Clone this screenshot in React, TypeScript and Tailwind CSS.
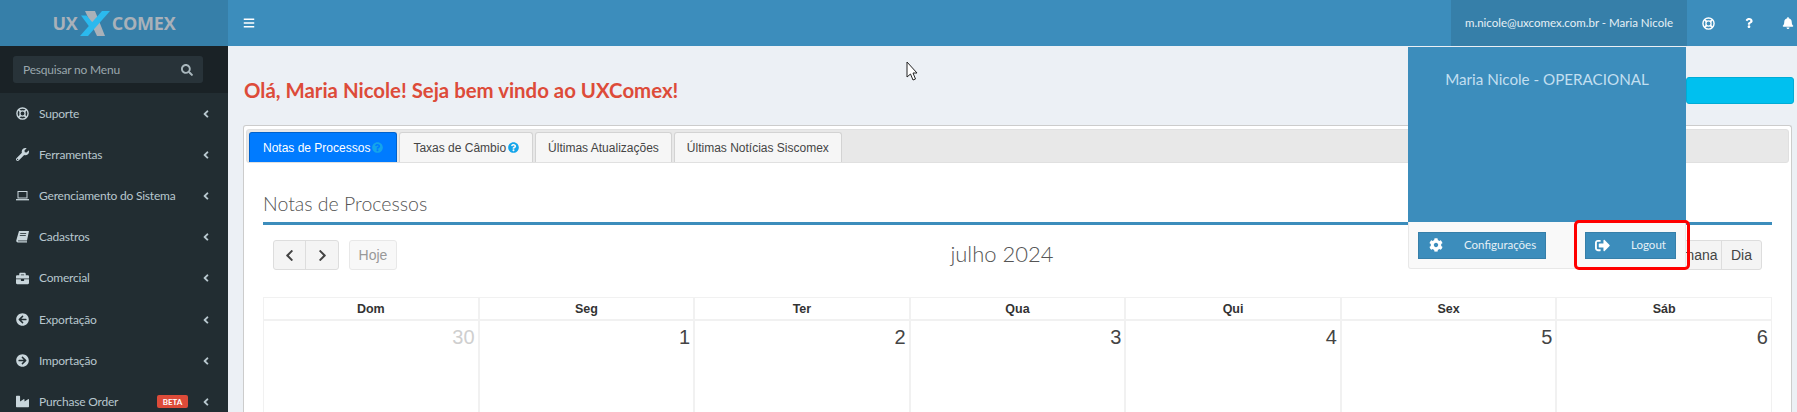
import type { ReactNode } from "react";
import {
  FaAngleLeft,
  FaArrowCircleLeft,
  FaArrowCircleRight,
  FaBars,
  FaBell,
  FaBriefcase,
  FaChevronLeft,
  FaChevronRight,
  FaCog,
  FaIndustry,
  FaQuestion,
  FaQuestionCircle,
  FaSearch,
  FaSignOutAlt,
  FaWrench,
} from "react-icons/fa";

// the FA4 glyphs of the original are not in the packages, so these three are drawn
function LifeRingIcon({ className }: { className?: string }) {
  return (
    <svg viewBox="0 0 14 14" fill="none" stroke="currentColor" className={className}>
      <circle cx="7" cy="7" r="6" strokeWidth="1.5" />
      <circle cx="7" cy="7" r="2.8" strokeWidth="1.4" />
      <path d="M3 3l2 2M11 3L9 5M3 11l2-2M11 11L9 9" strokeWidth="2" />
    </svg>
  );
}

function LaptopIcon() {
  return (
    <svg viewBox="0 0 13 11" fill="none" stroke="currentColor" className="h-[11px] w-[13px]">
      <rect x="2" y="1.500" width="9" height="6.500" strokeWidth="1" />
      <path d="M0 9.700h13" strokeWidth="1.300" />
    </svg>
  );
}

function BookIcon() {
  return (
    <svg viewBox="0 0 13 12" className="h-[12px] w-[13px]">
      <path d="M3 0h10l-2 9.500H2.500c-.6 0-.8.800 0 .800H11v1.200H2c-1.300 0-2-1-1.700-2.200z" fill="currentColor" />
      <path d="M4.200 2.500h6M3.800 4.500h6" stroke="#222d32" strokeWidth="0.800" />
    </svg>
  );
}

const menu: { label: string; icon: ReactNode; beta?: boolean }[] = [
  { label: "Suporte", icon: <LifeRingIcon className="h-[13px] w-[13px]" /> },
  { label: "Ferramentas", icon: <FaWrench /> },
  { label: "Gerenciamento do Sistema", icon: <LaptopIcon /> },
  { label: "Cadastros", icon: <BookIcon /> },
  { label: "Comercial", icon: <FaBriefcase /> },
  { label: "Exportação", icon: <FaArrowCircleLeft /> },
  { label: "Importação", icon: <FaArrowCircleRight /> },
  { label: "Purchase Order", icon: <FaIndustry />, beta: true },
];

const weekDays = ["Dom", "Seg", "Ter", "Qua", "Qui", "Sex", "Sáb"];
const days = ["30", "1", "2", "3", "4", "5", "6"];

function Logo() {
  return (
    <div className="flex h-[46px] shrink-0 items-center justify-center bg-[#367fa9] font-['Open_Sans',sans-serif] text-[18px] font-bold text-[#a9b1b9]">
      <span>UX</span>
      <svg viewBox="0 0 30 25" className="mx-[2px] h-[25px] w-[30px]">
        <path d="M5 0h10l10 25h-8z" fill="#a9b1b9" />
        <path d="M22 0h8L8 25H0z" fill="#2bb9ee" />
        <path d="M1 4.500h5.500L13 12l-3.500 4z" fill="#2bb9ee" />
      </svg>
      <span>COMEX</span>
    </div>
  );
}

function Sidebar() {
  return (
    <aside className="flex w-[228px] shrink-0 flex-col bg-[#222d32] font-['Lato',sans-serif] text-[12px] tracking-[-0.2px] text-[#b8c7ce]">
      <Logo />
      <div className="flex h-[47px] shrink-0 items-center bg-[#1a2226] px-[13px]">
        <div className="flex h-[27px] w-[190px] items-center justify-between rounded-[3px] bg-[#283339] px-[10px] text-[#9aa7ad]">
          <span>Pesquisar no Menu</span>
          <FaSearch className="text-[12px] text-[#a9b7bd]" />
        </div>
      </div>
      <nav className="flex flex-col">
        {menu.map((item) => (
          <div key={item.label} className="flex h-[41.2px] shrink-0 items-center pr-[16px] pl-[16px]">
            <span className="flex w-[23px] text-[13px] text-[#c9d6dc]">{item.icon}</span>
            <span className="flex-1 whitespace-nowrap">{item.label}</span>
            {item.beta && (
              <span className="mr-[12px] flex h-[13px] w-[31px] items-center justify-center rounded-[2px] bg-[#dd4b39] text-[8px] font-bold tracking-normal text-white">
                BETA
              </span>
            )}
            <FaAngleLeft className="text-[12px]" />
          </div>
        ))}
      </nav>
    </aside>
  );
}

function TopBar() {
  return (
    <header className="flex h-[46px] shrink-0 items-center bg-[#3c8dbc] font-['Lato',sans-serif] text-white">
      <FaBars className="ml-[15px] text-[12px]" />
      <div className="ml-auto flex h-full w-[236px] items-center justify-center bg-[#367fa9] text-[11.5px] text-[#e6f0f6]">
        m.nicole@uxcomex.com.br - Maria Nicole
      </div>
      <div className="flex w-[110px] items-center pl-[15px] text-[12px]">
        <LifeRingIcon className="h-[13px] w-[13px]" />
        <FaQuestion className="ml-[29px] text-[10px]" />
        <FaBell className="ml-[28px]" />
      </div>
    </header>
  );
}

function Tab({ label, active, help }: { label: string; active?: boolean; help?: boolean }) {
  return (
    <div
      className={
        active
          ? "flex h-[30px] items-center gap-[2px] rounded-t-[3px] border border-b-0 border-[#0062cc] bg-[#007bff] px-[13px] text-white"
          : help
            ? "flex h-[30px] items-center gap-[2px] rounded-t-[3px] border border-b-0 border-[#d3d3d3] bg-[#f6f6f6] px-[13px] text-[#454545]"
            : "flex h-[30px] items-center rounded-t-[3px] border border-b-0 border-[#d3d3d3] bg-[#f6f6f6] px-[12px] text-[#454545]"
      }
    >
      {label}
      {help && <FaQuestionCircle className="text-[11px] text-[#14a5ea]" />}
    </div>
  );
}

function Calendar() {
  return (
    <div className="mx-[19px] flex-1">
      <div className="grid grid-cols-7 border-t border-b-2 border-[#f1f1f1] text-[12.5px] font-bold text-[#333]">
        {weekDays.map((day) => (
          <div key={day} className="flex h-[21px] items-center justify-center border-r border-l border-[#f1f1f1] pt-[1px]">
            {day}
          </div>
        ))}
      </div>
      <div className="grid h-[100px] grid-cols-7 text-[20px] text-[#444]">
        {days.map((day) => (
          <div
            key={day}
            className={
              day === "30"
                ? "border-r border-l border-[#f1f1f1] pt-[1px] pr-[3px] text-right text-[#cfcfcf]"
                : "border-r border-l border-[#f1f1f1] pt-[1px] pr-[3px] text-right"
            }
          >
            {day}
          </div>
        ))}
      </div>
    </div>
  );
}

function Card() {
  return (
    <section className="mr-[5px] ml-[15px] flex flex-1 flex-col overflow-hidden rounded-t-[3px] border border-b-0 border-[#ccc] bg-white font-['Liberation_Sans',sans-serif]">
      <div className="mx-[2px] mt-[3px] flex h-[34px] shrink-0 items-end gap-[2px] rounded-[3px] border border-[#e0e0e0] bg-[#e8e8e8] pl-[2px] text-[12px]">
        <Tab label="Notas de Processos" active help />
        <Tab label="Taxas de Câmbio" help />
        <Tab label="Últimas Atualizações" />
        <Tab label="Últimas Notícias Siscomex" />
      </div>
      <div className="mx-[19px] flex h-[62px] shrink-0 items-center border-b-[3px] border-[#3c8dbc] pt-[22px] font-['Lato',sans-serif] text-[19.5px] font-light text-[#555]">
        Notas de Processos
      </div>
      <div className="mx-[29px] mt-[15px] mb-[27px] flex h-[30px] shrink-0 items-center text-[14px]">
        <div className="flex h-full rounded-[3px] border border-[#ddd] bg-[#f4f4f4] text-[#444]">
          <span className="flex w-[32px] items-center justify-center border-r border-[#ddd]">
            <FaChevronLeft className="text-[13px]" />
          </span>
          <span className="flex w-[32px] items-center justify-center">
            <FaChevronRight className="text-[13px]" />
          </span>
        </div>
        <div className="ml-[10px] flex h-full w-[48px] items-center justify-center rounded-[3px] border border-[#e8e8e8] bg-[#f8f8f8] text-[#999]">
          Hoje
        </div>
        <div className="flex-1 pr-[14px] pb-[3px] text-center font-['Lato',sans-serif] text-[22px] font-light text-[#555]">
          julho 2024
        </div>
        <div className="flex h-full rounded-[3px] border border-[#ddd] bg-[#f4f4f4] text-[#444]">
          <span className="flex w-[40px] items-center justify-center border-r border-[#ddd]">Mês</span>
          <span className="flex w-[60px] items-center justify-center border-r border-[#ddd]">Semana</span>
          <span className="flex w-[39px] items-center justify-center">Dia</span>
        </div>
      </div>
      <Calendar />
    </section>
  );
}

function UserDropdown() {
  return (
    <div className="absolute top-[47px] left-[1408px] w-[278px] font-['Lato',sans-serif]">
      <div className="h-[175px] bg-[#3c8dbc] pt-[21px] text-center text-[15.2px] text-[#c2dff0]">
        Maria Nicole - OPERACIONAL
      </div>
      <div className="flex h-[47px] items-center justify-between rounded-b-[3px] border border-t-0 border-[#e8e8e8] bg-[#f9f9f9] px-[9px] text-[11.5px] text-[#e6f0f6]">
        <div className="flex h-[27px] w-[128px] items-center border border-[#367fa9] bg-[#3c8dbc] pl-[10px]">
          <FaCog className="text-[14px] text-white" />
          <span className="ml-[21px]">Configurações</span>
        </div>
        <div className="relative flex h-[27px] w-[91px] items-center border border-[#367fa9] bg-[#3c8dbc] pl-[9px]">
          <FaSignOutAlt className="text-[15px] text-white" />
          <span className="ml-[21px]">Logout</span>
          <div className="absolute -top-[13px] -left-[12px] h-[50px] w-[116px] rounded-[5px] border-[3.5px] border-[#f00]" />
        </div>
      </div>
    </div>
  );
}

export default function App() {
  return (
    <div className="relative flex h-[412px] w-[1797px] overflow-hidden bg-[#ecf0f5]">
      <Sidebar />
      <main className="flex min-w-0 flex-1 flex-col">
        <TopBar />
        <div className="flex h-[79px] shrink-0 items-center justify-between pt-[10px] pr-[3px] pl-[16px]">
          <h1 className="font-['Lato',sans-serif] text-[20.4px] font-bold text-[#dd4b39]">
            Olá, Maria Nicole! Seja bem vindo ao UXComex!
          </h1>
          <div className="mt-[-1px] h-[27px] w-[108px] rounded-[3px] border border-[#00acd6] bg-[#00c0ef]" />
        </div>
        <Card />
      </main>
      <UserDropdown />
      <svg viewBox="0 0 14 21" className="absolute top-[61px] left-[906px] h-[21px] w-[14px]">
        <path d="M1 1v15l3.500-3 2.500 6 2.500-1-2.500-6H11z" fill="#fff" stroke="#222" strokeWidth="1" />
      </svg>
    </div>
  );
}
